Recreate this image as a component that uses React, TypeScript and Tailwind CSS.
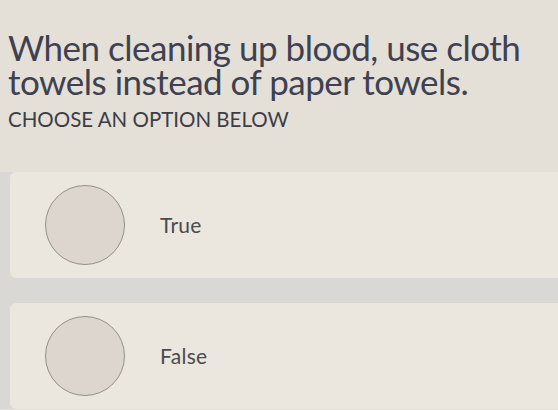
export default function App() {
  const options = ["True", "False"];
  return (
    <div
      className="w-[558px] h-[410px] overflow-hidden bg-[#e4e0d8] text-[#3f3f4a]"
      style={{ fontFamily: "Lato, 'Noto Sans', sans-serif" }}
    >
      <div className="pl-[8px] pt-[30px]">
        <h1 className="text-[35px] leading-[34px] font-normal tracking-[-0.5px] text-[#404150] whitespace-nowrap">
          When cleaning up blood, use cloth
          <br />
          towels instead of paper towels.
        </h1>
        <p className="mt-[9px] text-[20.5px] leading-[24px] uppercase text-[#3d3d45]">
          CHOOSE AN OPTION BELOW
        </p>
      </div>
      <div className="mt-[41px] flex flex-col bg-[#d9d8d5]">
        {options.map((label, i) => (
          <div
            key={label}
            className={`ml-[10px] h-[106px] flex items-center rounded-l-[6px] bg-[#ebe7de] ${i === 0 ? "mb-[25px]" : ""}`}
          >
            <div className="ml-[35px] w-[80px] h-[80px] rounded-full border-[1.5px] border-[#948f89] bg-[#dcd6cf]" />
            <span className="ml-[35px] text-[21px] tracking-[0.3px] text-[#4a4a4c]">{label}</span>
          </div>
        ))}
      </div>
    </div>
  );
}
